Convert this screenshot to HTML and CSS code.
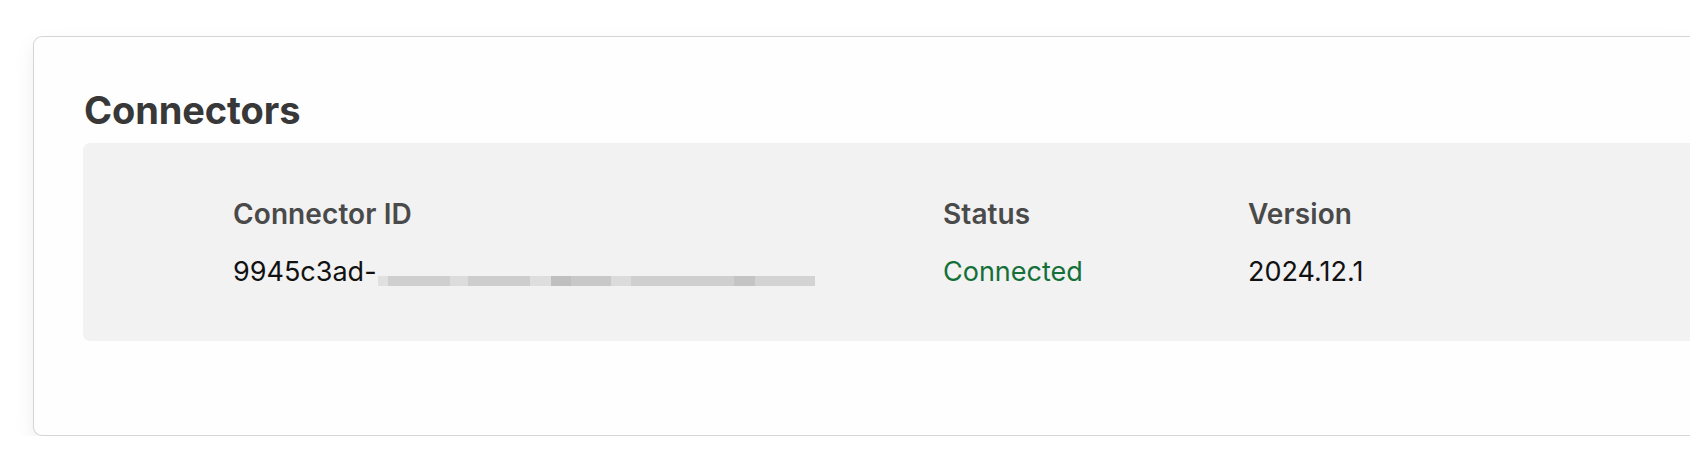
FILE: index.html
```html
<!DOCTYPE html>
<html lang="en">
<head>
<meta charset="utf-8">
<title>Connectors</title>
<link rel="stylesheet" href="styles.css">
</head>
<body>
<main class="page">
  <section class="card">
    <h2 class="card-title">Connectors</h2>
    <div class="panel">
      <div class="grid">
        <div class="label">Connector ID</div>
        <div class="label">Status</div>
        <div class="label">Version</div>
        <div class="value">9945c3ad-<span class="redacted" aria-label="redacted"><i class="s1"></i><i class="s2"></i><i class="s3"></i><i class="s4"></i><i class="s5"></i><i class="s6"></i><i class="s7"></i><i class="s8"></i><i class="s9"></i><i class="s10"></i><i class="s11"></i></span></div>
        <div class="value status">Connected</div>
        <div class="value">2024.12.1</div>
      </div>
    </div>
  </section>
</main>
</body>
</html>
```

FILE: styles.css
```css
html, body {
  margin: 0;
  padding: 0;
  background: #ffffff;
}

body {
  font-family: Inter, "Noto Sans", "Liberation Sans", sans-serif;
  overflow: hidden;
}

.page {
  padding: 36px 0 0 33px;
}

.card {
  background: #fefefe;
  border: 1.5px solid #d5d5d5;
  border-right: none;
  border-radius: 9px 0 0 9px;
  box-shadow: 0 8px 20px rgba(0, 0, 0, 0.07);
  padding: 50px 0 94px 49px;
}

.card-title {
  margin: 0 0 10px 1px;
  font-size: 38px;
  font-weight: 700;
  line-height: 46px;
  color: #383838;
  letter-spacing: -0.1px;
}

.panel {
  background: #f2f2f2;
  border-radius: 7px 0 0 7px;
  height: 198px;
  box-sizing: border-box;
  padding: 54px 0 0 150px;
}

.grid {
  display: grid;
  grid-template-columns: 710px 305px auto;
  row-gap: 24px;
}

.label {
  font-size: 28px;
  font-weight: 600;
  line-height: 34px;
  color: #4a4a4a;
  letter-spacing: 0.1px;
}

.value {
  font-size: 27px;
  font-weight: 400;
  line-height: 34px;
  color: #111111;
  white-space: nowrap;
}

.status {
  color: #137038;
}

.redacted {
  display: inline-flex;
  vertical-align: -5px;
  height: 10px;
  width: 437px;
  margin-left: 1px;
}

.redacted i {
  display: block;
  height: 100%;
}

.redacted .s1 { flex: 25 1 0; background: #e0e0e0; }
.redacted .s2 { flex: 150 1 0; background: #cfcfcf; }
.redacted .s3 { flex: 45 1 0; background: #dcdcdc; }
.redacted .s4 { flex: 150 1 0; background: #cdcdcd; }
.redacted .s5 { flex: 50 1 0; background: #dedede; }
.redacted .s6 { flex: 50 1 0; background: #bfbfbf; }
.redacted .s7 { flex: 95 1 0; background: #c8c8c8; }
.redacted .s8 { flex: 50 1 0; background: #dbdbdb; }
.redacted .s9 { flex: 250 1 0; background: #cfcfcf; }
.redacted .s10 { flex: 50 1 0; background: #c4c4c4; }
.redacted .s11 { flex: 145 1 0; background: #d3d3d3; }
```
